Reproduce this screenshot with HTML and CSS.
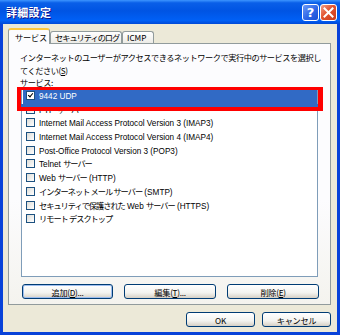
FILE: index.html
```html
<!DOCTYPE html>
<html lang="ja">
<head>
    <meta charset="UTF-8">
    <title>詳細設定</title>
    <link rel="stylesheet" href="styles.css">
</head>
<body>
    <div class="window">
        <div class="titlebar">
            <div class="title">詳細設定</div>
            <div class="tbtn help">?</div>
            <div class="tbtn close">
                <svg width="11" height="11" viewBox="0 0 11 11"><path d="M1.5 1.5 L9.5 9.5 M9.5 1.5 L1.5 9.5" stroke="#fff" stroke-width="2" stroke-linecap="square"/></svg>
            </div>
        </div>

        <div class="dialog">
            <div class="tabs">
                <div class="tab active">サービス</div>
                <div class="tab">セキュリティのログ</div>
                <div class="tab">ICMP</div>
            </div>

            <div class="panel">
                <div class="desc">
                    インターネットのユーザーがアクセスできるネットワークで実行中のサービスを選択し<br>
                    てください(<u>S</u>)
                </div>
                <div class="label">サービス:</div>

                <div class="listwrap">
                    <div class="list">
                        <div class="item sel"><span class="cb on"></span>9442 UDP</div>
                        <div class="item"><span class="cb"></span>FTP <span class="jp">サーバー</span></div>
                        <div class="item"><span class="cb"></span>Internet Mail Access Protocol Version 3 (IMAP3)</div>
                        <div class="item"><span class="cb"></span>Internet Mail Access Protocol Version 4 (IMAP4)</div>
                        <div class="item"><span class="cb"></span>Post-Office Protocol Version 3 (POP3)</div>
                        <div class="item"><span class="cb"></span>Telnet <span class="jp">サーバー</span></div>
                        <div class="item"><span class="cb"></span>Web <span class="jp">サーバー</span> (HTTP)</div>
                        <div class="item"><span class="cb"></span><span class="jp">インターネット メール サーバー</span> (SMTP)</div>
                        <div class="item"><span class="cb"></span><span class="jp">セキュリティで保護された</span> Web <span class="jp">サーバー</span> (HTTPS)</div>
                        <div class="item"><span class="cb"></span><span class="jp">リモート デスクトップ</span></div>
                    </div>
                    <div class="mark"></div>
                </div>

                <div class="btnrow">
                    <div class="btn focus">追加(<u>D</u>)...</div>
                    <div class="btn">編集(<u>T</u>)...</div>
                    <div class="btn">削除(<u>E</u>)</div>
                </div>
            </div>

            <div class="footer">
                <div class="btn wide">OK</div>
                <div class="btn wide">キャンセル</div>
            </div>
        </div>
    </div>
</body>
</html>
```

FILE: styles.css
```css
html, body {
    margin: 0;
    padding: 0;
}

body {
    width: 340px;
    height: 335px;
    overflow: hidden;
    font-family: "Liberation Sans", "Noto Sans CJK JP", sans-serif;
    font-size: 8.2px;
    color: #000;
}

.window {
    height: 335px;
    box-sizing: border-box;
    display: flex;
    flex-direction: column;
    background: #0842d9;
    padding: 0 3px 3px 3px;
}

/* title bar */
.titlebar {
    height: 24px;
    margin: 0 -3px;
    padding: 0 3px 0 6px;
    display: flex;
    align-items: center;
    background: linear-gradient(#3d95ff 0%, #0a5fe8 12%, #0054e3 45%, #0060f6 85%, #0049d6 100%);
}

.title {
    flex: 1;
    color: #fff;
    font-family: "Noto Sans CJK JP", sans-serif;
    font-size: 11px;
    font-weight: bold;
    text-shadow: 1px 1px 0 #0f1089;
    letter-spacing: 0.3px;
}

.tbtn {
    width: 17px;
    height: 17px;
    box-sizing: border-box;
    border: 1px solid #fff;
    border-radius: 3px;
    display: flex;
    align-items: center;
    justify-content: center;
    color: #fff;
    font-family: "DejaVu Sans", sans-serif;
    font-weight: bold;
    font-size: 13px;
    margin-top: 1px;
}

.help {
    background: linear-gradient(135deg, #6e9bf7 0%, #2e66e6 55%, #1a4fd4 100%);
    margin-right: 1px;
}

.close {
    background: linear-gradient(135deg, #f0a08c 0%, #e2532f 45%, #c93c1c 100%);
}

/* dialog body */
.dialog {
    flex: 1;
    background: #ece9d8;
    padding: 4px 6px 0 5px;
    display: flex;
    flex-direction: column;
}

.tabs {
    display: flex;
    height: 15px;
    position: relative;
    z-index: 1;
    font-family: "Noto Sans CJK JP", sans-serif;
}

.tab {
    height: 12px;
    margin-top: 3px;
    box-sizing: border-box;
    padding: 0 4px;
    line-height: 11px;
    white-space: nowrap;
    border: 1px solid #919b9c;
    border-bottom: none;
    border-radius: 3px 3px 0 0;
    background: linear-gradient(#fff, #ecebe6);
}

.tab:nth-child(2) {
    width: 72px;
    letter-spacing: -1px;
}

.tab:nth-child(3) {
    width: 32px;
}

.tab.active {
    width: 42px;
    height: 16px;
    margin-top: 0;
    line-height: 14px;
    padding: 0 0 0 6px;
    border-top: 2px solid #ffc83c;
    background: #fcfcfe;
    letter-spacing: -0.2px;
}

.panel {
    height: 262px;
    box-sizing: border-box;
    border: 1px solid #919b9c;
    background: linear-gradient(#fcfcfe 60%, #f4f3ee);
    padding: 7px 12px 0 12px;
    display: flex;
    flex-direction: column;
}

.desc, .label {
    margin-left: -1px;
    line-height: 12.5px;
    white-space: nowrap;
    letter-spacing: -0.45px;
    font-family: "Noto Sans CJK JP", sans-serif;
}

.label {
    height: 11px;
    line-height: 12px;
}

.listwrap {
    position: relative;
    margin-top: 1px;
}

.list {
    height: 189px;
    box-sizing: border-box;
    border: 1px solid #7f9db9;
    background: #fff;
    padding: 1px 0 0 1px;
}

.item {
    height: 13.7px;
    line-height: 13.7px;
    padding-left: 3px;
    white-space: nowrap;
}

.jp {
    letter-spacing: -1px;
}

.item.sel {
    background: #316ac5;
    color: #fff;
}

.cb {
    display: inline-block;
    vertical-align: -1px;
    width: 9px;
    height: 9px;
    box-sizing: border-box;
    border: 1px solid #1c5180;
    background: linear-gradient(135deg, #dcdcd7, #fff);
    margin-right: 4px;
    position: relative;
}

.cb.on {
    background: #fff;
}

.cb.on::after {
    content: "";
    position: absolute;
    left: 1.5px;
    top: 0px;
    width: 2px;
    height: 4px;
    border: solid #000;
    border-width: 0 1.5px 1.5px 0;
    transform: rotate(40deg);
}

/* red annotation frame over the first row */
.mark {
    position: absolute;
    left: -4px;
    top: -1px;
    width: 306px;
    height: 24px;
    box-sizing: border-box;
    border: 4px solid #ff0000;
    border-top-width: 3px;
    border-right-width: 5px;
    box-shadow: inset 0 -3px 0 #316ac5;
}

/* buttons */
.btnrow {
    display: grid;
    grid-template-columns: 91px 92px 92px;
    column-gap: 11px;
    margin-top: 7px;
    margin-left: 1px;
}

.btn {
    height: 15px;
    box-sizing: border-box;
    border: 1px solid #003c74;
    border-radius: 3px;
    background: linear-gradient(#ffffff 0%, #f3f3ef 60%, #d6d0c5 100%);
    display: flex;
    align-items: center;
    justify-content: center;
    white-space: pre;
    font-family: "Noto Sans CJK JP", sans-serif;
    letter-spacing: -0.3px;
}

.btn.focus {
    box-shadow: inset 0 0 0 1px #9dbdee;
}

.footer {
    display: flex;
    justify-content: flex-end;
    gap: 7px;
    margin-top: 7px;
}

.btn.wide {
    width: 69px;
}
```
